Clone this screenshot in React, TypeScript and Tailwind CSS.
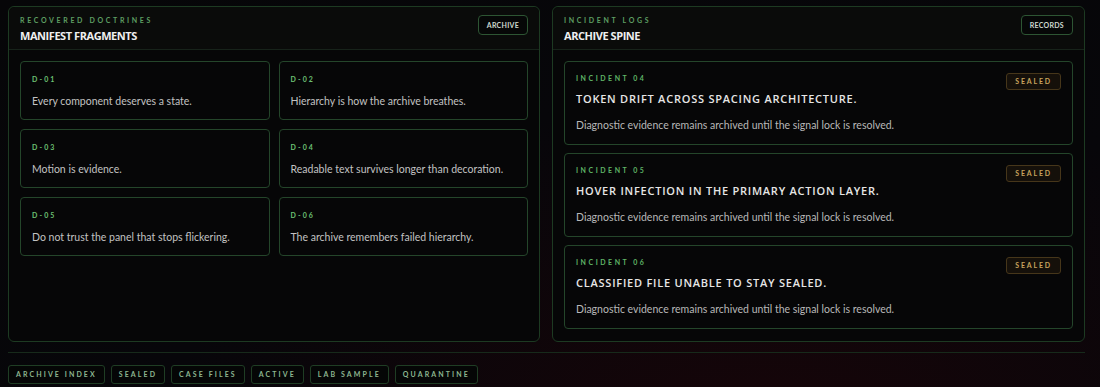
import React from 'react'

const doctrines = [
    { id: 'D-01', text: 'Every component deserves a state.' },
    { id: 'D-02', text: 'Hierarchy is how the archive breathes.' },
    { id: 'D-03', text: 'Motion is evidence.' },
    { id: 'D-04', text: 'Readable text survives longer than decoration.' },
    { id: 'D-05', text: 'Do not trust the panel that stops flickering.' },
    { id: 'D-06', text: 'The archive remembers failed hierarchy.' },
]

const incidents = [
    { id: 'INCIDENT 04', title: 'TOKEN DRIFT ACROSS SPACING ARCHITECTURE.' },
    { id: 'INCIDENT 05', title: 'HOVER INFECTION IN THE PRIMARY ACTION LAYER.' },
    { id: 'INCIDENT 06', title: 'CLASSIFIED FILE UNABLE TO STAY SEALED.' },
]

const tags = ['ARCHIVE INDEX', 'SEALED', 'CASE FILES', 'ACTIVE', 'LAB SAMPLE', 'QUARANTINE']

function PanelHeader({ label, title, action }: { label: string; title: string; action: string }) {
    return (
        <div className="flex items-start justify-between h-[43px] border-b border-[#17231a] bg-[#0a0b0a] pl-[11px] pr-[11px] pt-[8px] rounded-t-[6px]">
            <div className="flex flex-col">
                <span className="text-[7px] font-bold tracking-[0.38em] text-[#5e9f63] leading-[10px]">{label}</span>
                <span className="mt-[4px] text-[11px] font-bold tracking-[-0.04em] text-[#efefef] leading-[14px]" style={{ fontFamily: '"Open Sans", sans-serif' }}>{title}</span>
            </div>
            <div className="h-[20px] px-[8px] flex items-center rounded-[4px] border border-[#2d5533] bg-[#060707] text-[7px] font-bold tracking-[0.04em] text-[#cfd8cf]">
                {action}
            </div>
        </div>
    )
}

export default function App() {
    return (
        <div
            className="w-[1100px] h-[387px] overflow-hidden bg-[radial-gradient(ellipse_at_70%_110%,#160509_0%,#07060a_55%,#060608_100%)] pl-[8px] pr-[15px] pt-[6px]"
            style={{ fontFamily: 'Lato, "Noto Sans", sans-serif' }}
        >
            <div className="flex gap-[12px]">
                {/* left panel */}
                <div className="w-[532px] h-[336px] rounded-[6px] border border-[#1d3a22] bg-[#060607]">
                    <PanelHeader label="RECOVERED DOCTRINES" title="MANIFEST FRAGMENTS" action="ARCHIVE" />
                    <div className="grid grid-cols-2 gap-x-[9px] gap-y-[9px] px-[11px] pt-[11px]">
                        {doctrines.map((d) => (
                            <div key={d.id} className="h-[59px] rounded-[4px] border border-[#24452a] bg-[#060607] px-[11px] pt-[12px]">
                                <div className="text-[7px] font-bold tracking-[0.3em] text-[#6cc073] leading-[10px]">{d.id}</div>
                                <div className="mt-[10px] text-[10.5px] text-[#c2c2c2] leading-[14px]">{d.text}</div>
                            </div>
                        ))}
                    </div>
                </div>

                {/* right panel */}
                <div className="w-[533px] h-[336px] rounded-[6px] border border-[#1d3a22] bg-[#060607]">
                    <PanelHeader label="INCIDENT LOGS" title="ARCHIVE SPINE" action="RECORDS" />
                    <div className="flex flex-col gap-[8px] px-[11px] pt-[11px]">
                        {incidents.map((i) => (
                            <div key={i.id} className="h-[84px] rounded-[4px] border border-[#24452a] bg-[#060607] pl-[11px] pr-[11px] pt-[11px] flex justify-between">
                                <div className="flex flex-col">
                                    <span className="text-[7px] font-bold tracking-[0.36em] text-[#5fb466] leading-[10px]">{i.id}</span>
                                    <span className="mt-[9px] text-[11px] font-semibold tracking-[0.07em] text-[#e6e6e6] leading-[14px]" style={{ fontFamily: '"Open Sans", sans-serif' }}>{i.title}</span>
                                    <span className="mt-[12px] text-[10.5px] text-[#b8b8b8] leading-[14px]">Diagnostic evidence remains archived until the signal lock is resolved.</span>
                                </div>
                                <div className="h-[17px] px-[8px] flex items-center rounded-[3px] border border-[#46361a] bg-[#15100a] text-[7px] font-bold tracking-[0.26em] text-[#c9a45e]">
                                    SEALED
                                </div>
                            </div>
                        ))}
                    </div>
                </div>
            </div>

            <div className="mt-[10px] border-t border-[#172a1b]" />

            <div className="flex gap-[6px] mt-[12px]">
                {tags.map((t) => (
                    <div key={t} className="h-[19px] px-[7px] flex items-center rounded-[3px] border border-[#1f3d24] bg-[#050606] text-[7px] font-bold tracking-[0.3em] text-[#8db690]">
                        {t}
                    </div>
                ))}
            </div>
        </div>
    )
}
